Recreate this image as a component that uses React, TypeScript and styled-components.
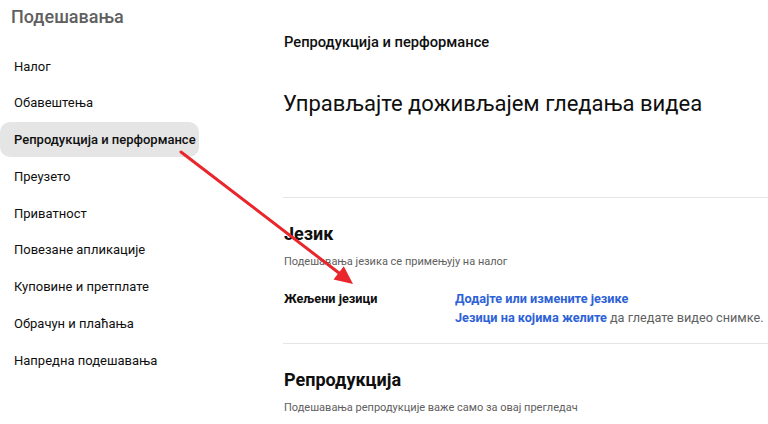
import React from "react";
import styled, { createGlobalStyle } from "styled-components";

const GlobalStyle = createGlobalStyle`
	html, body {
		margin: 0;
		padding: 0;
		background: #FFFFFF;
	}
	body {
		font-family: Roboto, "Noto Sans", "Liberation Sans", sans-serif;
		color: #0F0F0F;
	}
`

const StyledPage = styled.div`
	position: relative;
	display: flex;
	width: 768px;
	height: 424px;
	overflow: hidden;
	background: #FFFFFF;
`

const Sidebar = styled.aside`
	box-sizing: border-box;
	width: 240px;
	flex-shrink: 0;
	padding-top: 5px;

	.title {
		margin: 0 0 19.5px 0;
		padding-left: 11px;
		font-size: 18px;
		line-height: 24px;
		font-weight: 500;
		color: #606060;
	}
`

const NavList = styled.nav`
	display: flex;
	flex-direction: column;
	gap: 1.75px;
	align-items: flex-start;
`

const NavItem = styled.div<{ $active?: boolean }>`
	box-sizing: border-box;
	height: 35px;
	display: flex;
	align-items: center;
	padding: 0 3px 0 14px;
	font-size: 13px;
	font-weight: ${p => (p.$active ? 500 : 400)};
	color: #0F0F0F;
	background: ${p => (p.$active ? "#E5E5E5" : "transparent")};
	border-radius: 10px;
	white-space: nowrap;
`

const Main = styled.main`
	box-sizing: border-box;
	flex: 1;
	padding: 32px 0 0 43px;
	min-width: 0;

	.crumb {
		margin: 0 0 0 1px;
		font-size: 14.7px;
		line-height: 20px;
		font-weight: 500;
	}

	.headline {
		margin: 36px 0 77px 0;
		font-size: 22px;
		line-height: 32px;
		font-weight: 400;
		white-space: nowrap;
	}
`

const Section = styled.section`
	border-top: 1px solid #E5E5E5;
	padding: 22px 0 16px 1px;

	.heading {
		margin: 0;
		font-size: 18px;
		line-height: 28px;
		font-weight: 700;
	}

	.sub {
		margin: 6px 0 0 0;
		font-size: 11px;
		line-height: 16px;
		color: #606060;
	}
`

const SettingRow = styled.div`
	display: grid;
	grid-template-columns: 171px 1fr;
	margin-top: 19px;
	font-size: 12.7px;
	line-height: 19px;

	.label {
		font-weight: 700;
	}

	.value {
		white-space: nowrap;
		color: #606060;
	}
`

const Link = styled.a`
	color: #2D62D6;
	font-weight: 700;
	text-decoration: none;
`

const ArrowOverlay = styled.svg`
	position: absolute;
	left: 0;
	top: 0;
	pointer-events: none;
`

const navItems = [
	"Налог",
	"Обавештења",
	"Репродукција и перформансе",
	"Преузето",
	"Приватност",
	"Повезане апликације",
	"Куповине и претплате",
	"Обрачун и плаћања",
	"Напредна подешавања",
]

export default function App() {
	return (
		<>
			<GlobalStyle />
			<StyledPage>
				<Sidebar>
					<h2 className="title">Подешавања</h2>
					<NavList>
						{navItems.map((item, i) => (
							<NavItem key={item} $active={i === 2}>{item}</NavItem>
						))}
					</NavList>
				</Sidebar>
				<Main>
					<p className="crumb">Репродукција и перформансе</p>
					<h1 className="headline">Управљајте доживљајем гледања видеа</h1>
					<Section>
						<h3 className="heading">Језик</h3>
						<p className="sub">Подешавања језика се примењују на налог</p>
						<SettingRow>
							<div className="label">Жељени језици</div>
							<div className="value">
								<Link>Додајте или измените језике</Link>
								<br />
								<Link>Језици на којима желите</Link> да гледате видео снимке.
							</div>
						</SettingRow>
					</Section>
					<Section>
						<h3 className="heading">Репродукција</h3>
						<p className="sub">Подешавања репродукције важе само за овај прегледач</p>
					</Section>
				</Main>
				<ArrowOverlay width="768" height="424" viewBox="0 0 768 424">
					<line x1="181" y1="152" x2="339" y2="273" stroke="#E8262B" strokeWidth="3" strokeLinecap="round" />
					<polygon points="353,284 333.5,279.5 343.8,266.3" fill="#E8262B" />
				</ArrowOverlay>
			</StyledPage>
		</>
	)
}
